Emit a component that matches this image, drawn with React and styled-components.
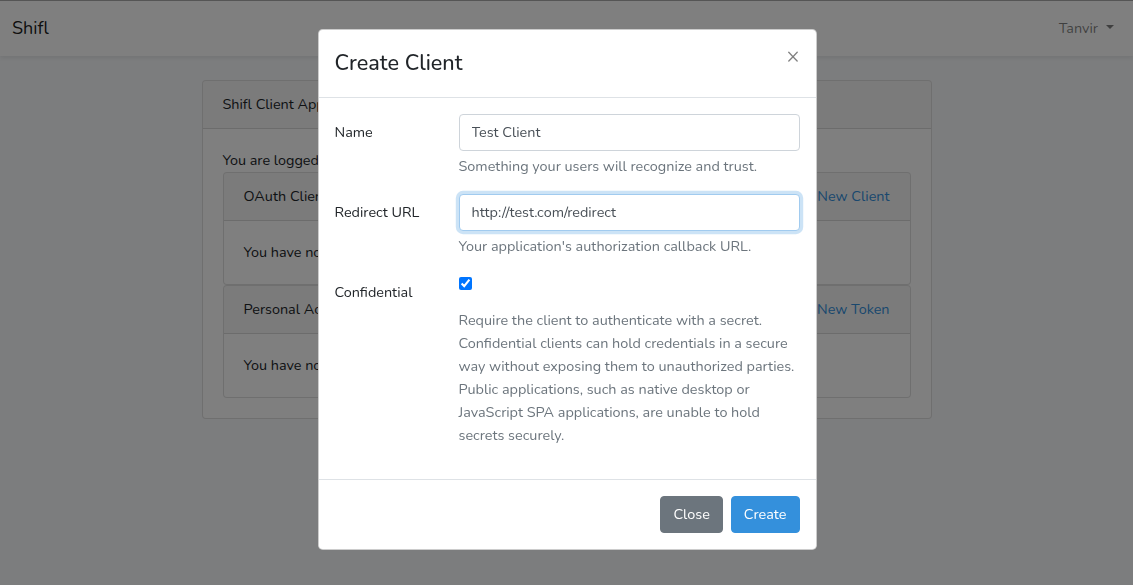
import React from "react";
import styled, { createGlobalStyle } from "styled-components";

const GlobalStyle = createGlobalStyle`
  html, body {
    margin: 0;
    padding: 0;
  }
  body {
    font-family: "Nunito", "Lato", "Open Sans", sans-serif;
    font-size: 14.4px;
    line-height: 1.6;
    color: #212529;
    background: #f8fafc;
  }
  * {
    box-sizing: border-box;
  }
`;

const Navbar = styled.nav`
  height: 56px;
  border-top: 1px solid #aaaaaa;
  background: #fff;
  box-shadow: 0 2px 4px rgba(0, 0, 0, 0.075);
  display: flex;
  align-items: center;
  justify-content: space-between;
  padding: 0 19px 0 12px;
`;

const Brand = styled.a`
  font-size: 18px;
  color: rgba(0, 0, 0, 0.9);
  text-decoration: none;
`;

const NavUser = styled.a`
  color: rgba(0, 0, 0, 0.5);
  text-decoration: none;
  display: flex;
  align-items: center;

  &::after {
    content: "";
    display: inline-block;
    margin-left: 8px;
    border-top: 4.3px solid;
    border-left: 4.3px solid transparent;
    border-right: 4.3px solid transparent;
    margin-top: -2px;
  }
`;

const Main = styled.main`
  padding-top: 24px;
`;

const Card = styled.div`
  width: ${(p) => (p.$inner ? "auto" : "730px")};
  margin: 0 auto;
  background: #fff;
  border: 1px solid rgba(0, 0, 0, 0.125);
  border-radius: 4px;
  overflow: hidden;
`;

const CardHeader = styled.div`
  padding: 12px 20px;
  background: rgba(0, 0, 0, 0.03);
  border-bottom: 1px solid rgba(0, 0, 0, 0.125);
  display: flex;
  justify-content: space-between;
`;

const CardBody = styled.div`
  padding: 20px;
`;

const Link = styled.a`
  color: #3490dc;
  text-decoration: none;
`;

const Backdrop = styled.div`
  position: fixed;
  inset: 0;
  background: rgba(0, 0, 0, 0.5);
`;

const ModalLayer = styled.div`
  position: fixed;
  inset: 0;
  display: flex;
  justify-content: center;
  align-items: flex-start;
`;

const ModalContent = styled.div`
  width: 499px;
  margin-top: 29px;
  margin-left: 1px;
  background: #fff;
  border: 1px solid rgba(0, 0, 0, 0.2);
  border-radius: 4.8px;
  display: flex;
  flex-direction: column;
`;

const ModalHeader = styled.div`
  display: flex;
  align-items: flex-start;
  justify-content: space-between;
  padding: 16px;
  border-bottom: 1px solid #dee2e6;
`;

const ModalTitle = styled.h4`
  margin: 0;
  font-size: 21.6px;
  font-weight: 500;
  line-height: 1.6;
`;

const CloseX = styled.button`
  margin: -16px -16px -16px auto;
  padding: 16px;
  background: transparent;
  border: 0;
  font-family: inherit;
  font-size: 21.6px;
  font-weight: 400;
  line-height: 1;
  color: #000;
  opacity: 0.5;
  cursor: pointer;
`;

const ModalBody = styled.div`
  padding: 16px;
`;

const FormGroup = styled.div`
  display: grid;
  grid-template-columns: 124px 1fr;
  margin-bottom: 16px;
`;

const Label = styled.label`
  padding: 7px 0;
  line-height: 1.6;
`;

const Input = styled.input`
  display: block;
  width: 100%;
  height: 37px;
  padding: 6px 12px;
  font-family: inherit;
  font-size: 14.4px;
  line-height: 1.6;
  color: #495057;
  background: #fff;
  border: 1px solid ${(p) => (p.$focus ? "#a1cbef" : "#ced4da")};
  border-radius: 4px;
  outline: none;
  box-shadow: ${(p) => (p.$focus ? "0 0 0 3.2px rgba(52, 144, 220, 0.25)" : "none")};
`;

const HelpText = styled.span`
  display: block;
  margin-top: 4px;
  color: #6c757d;
`;

const CheckLabel = styled.label`
  display: inline-block;
  margin-bottom: 8px;
  height: 23px;

  input {
    margin: 3px 0 0 0;
    width: 13px;
    height: 13px;
    vertical-align: top;
  }
`;

const ModalFooter = styled.div`
  display: flex;
  justify-content: flex-end;
  align-items: center;
  padding: 12px;
  border-top: 1px solid #dee2e6;
`;

const Button = styled.button`
  margin: 4px;
  padding: 6px 12px;
  font-family: inherit;
  font-size: 14.4px;
  line-height: 1.6;
  color: #fff;
  background: ${(p) => (p.$primary ? "#3490dc" : "#6c757d")};
  border: 1px solid ${(p) => (p.$primary ? "#3490dc" : "#6c757d")};
  border-radius: 4px;
  cursor: pointer;
`;

const App = () => {
    return (
        <>
            <GlobalStyle />
            <Navbar>
                <Brand href="#">Shifl</Brand>
                <NavUser href="#">Tanvir</NavUser>
            </Navbar>

            <Main>
                <Card>
                    <CardHeader>Shifl Client Applications</CardHeader>
                    <CardBody>
                        You are logged in!
                        <Card $inner>
                            <CardHeader>
                                <span>OAuth Clients</span>
                                <Link href="#">Create New Client</Link>
                            </CardHeader>
                            <CardBody>You have not created any OAuth clients.</CardBody>
                        </Card>
                        <Card $inner>
                            <CardHeader>
                                <span>Personal Access Tokens</span>
                                <Link href="#">Create New Token</Link>
                            </CardHeader>
                            <CardBody>You have not created any personal access tokens.</CardBody>
                        </Card>
                    </CardBody>
                </Card>
            </Main>

            <Backdrop />

            <ModalLayer>
                <ModalContent>
                    <ModalHeader>
                        <ModalTitle>Create Client</ModalTitle>
                        <CloseX type="button">×</CloseX>
                    </ModalHeader>

                    <ModalBody>
                        <FormGroup>
                            <Label>Name</Label>
                            <div>
                                <Input type="text" defaultValue="Test Client" />
                                <HelpText>Something your users will recognize and trust.</HelpText>
                            </div>
                        </FormGroup>

                        <FormGroup>
                            <Label>Redirect URL</Label>
                            <div>
                                <Input type="text" $focus defaultValue="http://test.com/redirect" />
                                <HelpText>Your application's authorization callback URL.</HelpText>
                            </div>
                        </FormGroup>

                        <FormGroup>
                            <Label>Confidential</Label>
                            <div>
                                <CheckLabel>
                                    <input type="checkbox" defaultChecked />
                                </CheckLabel>
                                <HelpText>
                                    Require the client to authenticate with a secret. Confidential clients can hold
                                    credentials in a secure way without exposing them to unauthorized parties.
                                    Public applications, such as native desktop or JavaScript SPA applications,
                                    are unable to hold secrets securely.
                                </HelpText>
                            </div>
                        </FormGroup>
                    </ModalBody>

                    <ModalFooter>
                        <Button type="button">Close</Button>
                        <Button type="button" $primary>Create</Button>
                    </ModalFooter>
                </ModalContent>
            </ModalLayer>
        </>
    );
};

export default App;
